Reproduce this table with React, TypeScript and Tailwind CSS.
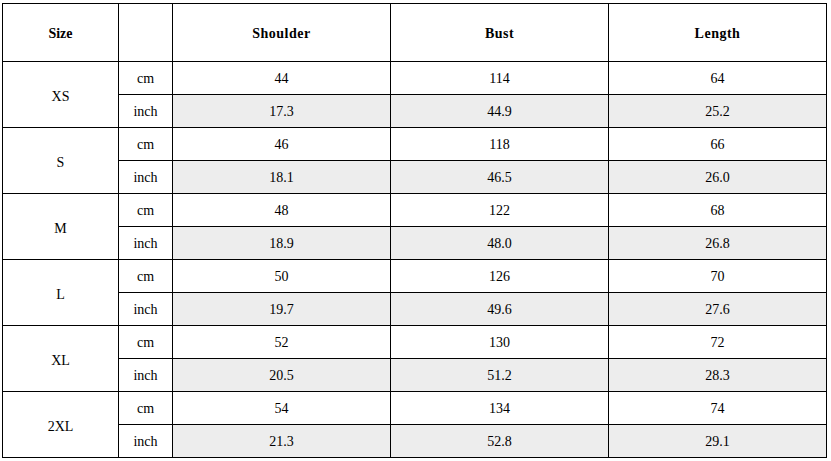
const rows = [
  { size: "XS", cm: ["44", "114", "64"], inch: ["17.3", "44.9", "25.2"] },
  { size: "S", cm: ["46", "118", "66"], inch: ["18.1", "46.5", "26.0"] },
  { size: "M", cm: ["48", "122", "68"], inch: ["18.9", "48.0", "26.8"] },
  { size: "L", cm: ["50", "126", "70"], inch: ["19.7", "49.6", "27.6"] },
  { size: "XL", cm: ["52", "130", "72"], inch: ["20.5", "51.2", "28.3"] },
  { size: "2XL", cm: ["54", "134", "74"], inch: ["21.3", "52.8", "29.1"] },
];

const cell = "flex items-center justify-center bg-white";

export default function App() {
  return (
    <div className="w-[831px] h-[461px] bg-white pt-[3px] pl-[2px] font-['Liberation_Serif','Times_New_Roman',serif] text-[14px] text-black">
      <div className="grid w-fit grid-cols-[115px_53px_217px_217px_217px] grid-rows-[57px_repeat(12,32px)] gap-px bg-black p-px">
        <div className={`${cell} pt-[2px] font-bold`}>Size</div>
        <div className={cell}></div>
        <div className={`${cell} pt-[2px] font-bold tracking-[0.5px]`}>Shoulder</div>
        <div className={`${cell} pt-[2px] font-bold tracking-[0.5px]`}>Bust</div>
        <div className={`${cell} pt-[2px] font-bold tracking-[0.5px]`}>Length</div>
        {rows.map((r) => (
          <div key={r.size} className="contents">
            <div className={`${cell} row-span-2 pt-[3px]`}>{r.size}</div>
            <div className={cell}>cm</div>
            {r.cm.map((v, i) => (
              <div key={"c" + i} className={cell}>{v}</div>
            ))}
            <div className={cell}>inch</div>
            {r.inch.map((v, i) => (
              <div key={"i" + i} className="flex items-center justify-center bg-[#ededed]">{v}</div>
            ))}
          </div>
        ))}
      </div>
    </div>
  );
}
